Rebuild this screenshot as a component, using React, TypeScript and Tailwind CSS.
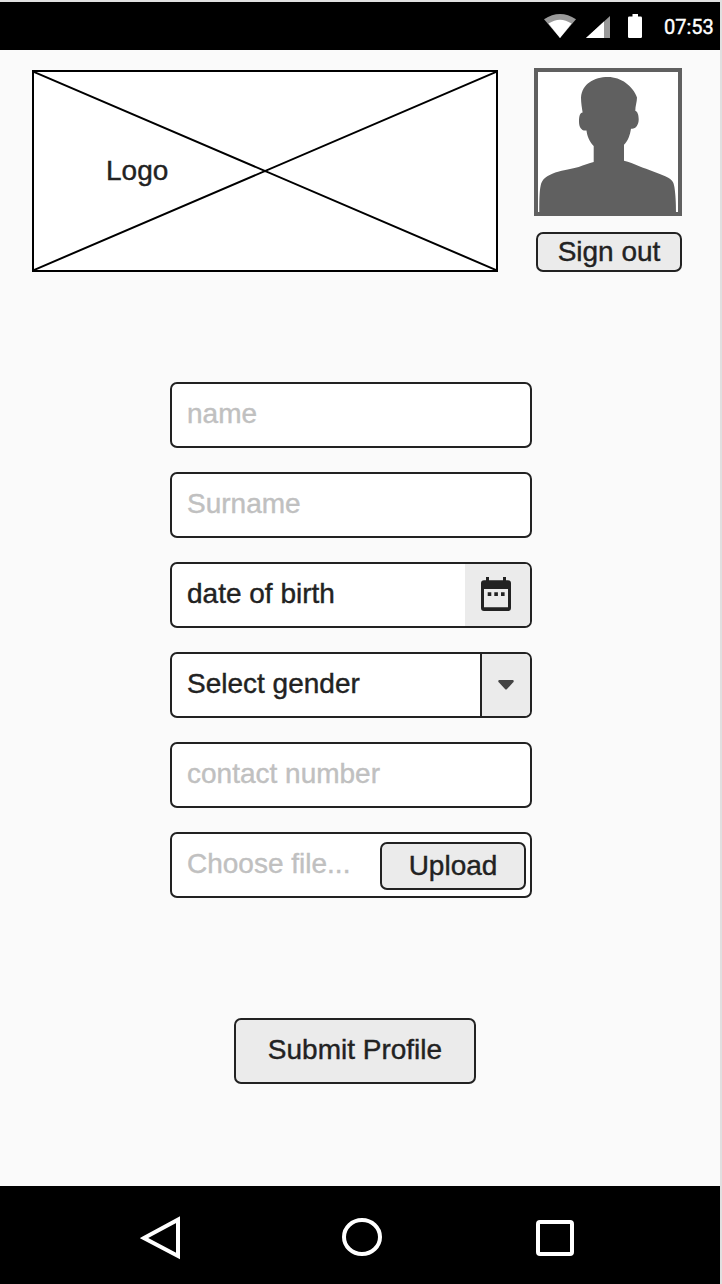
import React from "react";

function StatusBar() {
  return (
    <header className="flex h-12 shrink-0 items-center justify-end bg-black pr-[6px]">
      <svg width="98" height="24" viewBox="0 0 98 24" className="mr-[22px]">
        <path d="M0 5.200Q16 -5.200 32 5.200L16 24Z" fill="#999" />
        <path d="M4.500 9.600Q16 1.800 27.500 9.600L16 24Z" fill="#fff" />
        <path d="M42 24L66 2V24Z" fill="#999" />
        <path d="M42 24L60 7.500V24Z" fill="#fff" />
        <path d="M88.500 0h5.500v2.600h2.700a1.300 1.300 0 0 1 1.300 1.300v18.800a1.300 1.300 0 0 1-1.300 1.300h-11.400a1.300 1.300 0 0 1-1.300-1.300V3.900a1.300 1.300 0 0 1 1.300-1.300h3.200Z" fill="#fff" />
      </svg>
      <span className="mt-px w-[50px] whitespace-nowrap font-['Roboto',sans-serif] text-[20px] leading-6 text-white">07:53</span>
    </header>
  );
}

function LogoPlaceholder() {
  return (
    <div className="grid h-[202px] w-[466px] border-2 border-black bg-white">
      <svg className="col-start-1 row-start-1" width="462" height="198" viewBox="0 0 462 198">
        <path d="M0 0L462 198M0 198L462 0" stroke="#000" strokeWidth="2" />
      </svg>
      <span className="col-start-1 row-start-1 ml-[72px] mt-[83px] leading-8">Logo</span>
    </div>
  );
}

function Avatar() {
  return (
    <svg width="148" height="148" viewBox="0 0 148 148">
      <rect x="2" y="2" width="144" height="144" fill="#fff" stroke="#606060" strokeWidth="4" />
      <path
        fill="#606060"
        d="M5.300 145C5.300 133 5.300 124 6.700 117.500C7.800 111 13 107.500 21.300 104.500C30 101.700 38 101 44.700 99C50 97 55 95 59.700 94V78C55 73.500 53 67 52.500 62.500C47.500 63.300 45 59 45 53.700C45 48 46 45 48.600 44.600C48 40 47 35 47 29.500C48 16 60 9 74 9C87 9 99 18 103 29.500C103 34 101.300 38 101.300 42.800C103.500 43.500 104.700 47 104.700 51.300C104.700 57 101.500 61.500 97 60.700C96 67 94 73 90 76.700V92.700C95 93.500 100 96 104.700 98C114 101.700 126 105.500 134.700 110C139 112.500 139.700 115 140.400 119C141.700 128 142 135 142 145Z"
      />
    </svg>
  );
}

function CalendarIcon() {
  return (
    <svg width="30" height="34" viewBox="0 0 30 34">
      <path
        fill="#222"
        fillRule="evenodd"
        d="M5 0h3v3.300h14V0h3v3.300h2a3 3 0 0 1 3 3V31a3 3 0 0 1-3 3H3a3 3 0 0 1-3-3V6.300a3 3 0 0 1 3-3h2ZM3 12v18.300h24V12ZM6.700 15.300h3.600v3.600H6.700ZM13.300 15.300h3.600v3.600h-3.600ZM20 15.300h3.600v3.600H20Z"
      />
    </svg>
  );
}

const field =
  "flex h-[66px] w-full overflow-hidden rounded-[7px] border-2 border-[#222] bg-white";
const input =
  "min-w-0 flex-1 bg-transparent pl-[15px] pb-[2px] text-[28px] outline-none placeholder:text-[#c0c0c0] placeholder:opacity-100";
const button =
  "flex items-center justify-center rounded-[7px] border-2 border-[#222] bg-[#ebebeb] leading-8";

export default function App() {
  return (
    <div className="h-[1284px] w-[722px] bg-[#e0e0e0] pt-[2px] pr-[2px]">
      <div className="flex h-full w-[720px] flex-col bg-[#fafafa] font-['Liberation_Sans',Arial,sans-serif] text-[28px] text-[#222] [-webkit-text-stroke:0.4px]">
        <StatusBar />
        <main className="flex flex-1 flex-col">
          <div className="flex items-start justify-between pt-[18px] pr-[38px] pl-8">
            <div className="pt-[2px]">
              <LogoPlaceholder />
            </div>
            <div className="flex flex-col items-end gap-4">
              <Avatar />
              <button className={`${button} h-10 w-[146px]`}>Sign out</button>
            </div>
          </div>
          <form className="mt-[110px] ml-[170px] flex w-[362px] flex-col gap-6" onSubmit={(e) => e.preventDefault()}>
            <div className={field}>
              <input className={input} placeholder="name" />
            </div>
            <div className={field}>
              <input className={input} placeholder="Surname" />
            </div>
            <div className={field}>
              <span className="flex flex-1 items-center pb-[2px] pl-[15px]">date of birth</span>
              <span className="flex w-[65px] items-center justify-center bg-[#ebebeb] pr-[3px] pb-[2px]">
                <CalendarIcon />
              </span>
            </div>
            <div className={field}>
              <span className="flex flex-1 items-center pb-[2px] pl-[15px]">Select gender</span>
              <span className="flex w-[50px] items-center justify-center border-l-2 border-[#222] bg-[#ebebeb]">
                <svg width="16" height="10" viewBox="0 0 16 10">
                  <path d="M1 0H15Q16.500 1 15 2.500L9 9Q8 10 7 9L1 2.500Q-.5 1 1 0Z" fill="#444" />
                </svg>
              </span>
            </div>
            <div className={field}>
              <input className={input} placeholder="contact number" />
            </div>
            <div className={`${field} items-center pr-1`}>
              <span className="flex-1 pb-[2px] pl-[15px] text-[#c0c0c0]">Choose file...</span>
              <button className={`${button} mt-[2px] h-12 w-[146px]`}>Upload</button>
            </div>
          </form>
          <button className={`${button} mt-[120px] ml-[234px] h-[66px] w-[242px] pb-[2px]`}>Submit Profile</button>
        </main>
        <nav className="flex h-[98px] shrink-0 items-start bg-black pt-[30px] pl-[140px]">
          <svg width="40" height="44" viewBox="0 0 40 44">
            <path d="M4 22L38 3.700V40Z" fill="none" stroke="#fff" strokeWidth="4" />
          </svg>
          <svg className="ml-[162px]" width="40" height="44" viewBox="0 0 40 44">
            <ellipse cx="20" cy="21" rx="18" ry="17" fill="none" stroke="#fff" strokeWidth="4" />
          </svg>
          <svg className="ml-[154px]" width="38" height="44" viewBox="0 0 38 44">
            <rect x="2" y="6" width="34" height="32" rx="2" fill="none" stroke="#fff" strokeWidth="4" />
          </svg>
        </nav>
      </div>
    </div>
  );
}
